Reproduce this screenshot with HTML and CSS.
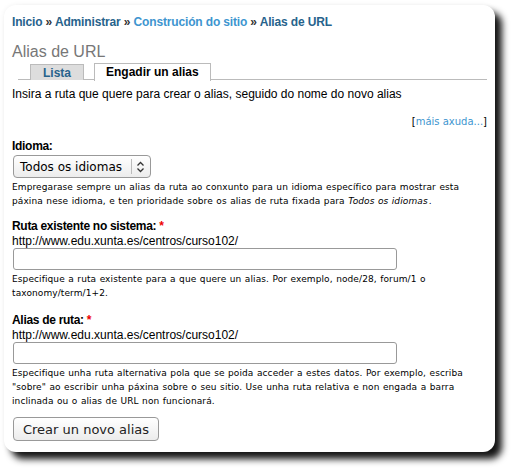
FILE: index.html
```html
<!DOCTYPE html>
<html lang="gl">
<head>
  <meta charset="UTF-8" />
  <title>Alias de URL</title>
  <link rel="stylesheet" href="styles.css">
</head>
<body>
  <div class="window">
    <div class="breadcrumb">
      <a href="#" class="crumb">Inicio</a> » <a href="#" class="crumb">Administrar</a> » <a href="#" class="crumb light">Construción do sitio</a> » <a href="#" class="crumb">Alias de URL</a>
    </div>
    <h1 class="title">Alias de URL</h1>
    <ul class="tabs">
      <li class="tab"><a href="#">Lista</a></li>
      <li class="tab active"><a href="#">Engadir un alias</a></li>
    </ul>
    <p class="intro">Insira a ruta que quere para crear o alias, seguido do nome do novo alias</p>
    <div class="more-help">[<a href="#">máis axuda...</a>]</div>

    <div class="field">
      <label class="label">Idioma:</label>
      <div class="select">
        <span class="select-value">Todos os idiomas</span>
        <span class="select-arrow">
          <svg width="9" height="12" viewBox="0 0 9 12"><path d="M1.5 4.5 L4.5 1.5 L7.5 4.5 M1.5 7.5 L4.5 10.5 L7.5 7.5" fill="none" stroke="#333" stroke-width="1.3"/></svg>
        </span>
      </div>
      <div class="desc">Empregarase sempre un alias da ruta ao conxunto para un idioma específico para mostrar esta páxina nese idioma, e ten prioridade sobre os alias de ruta fixada para <em>Todos os idiomas</em>.</div>
    </div>

    <div class="field">
      <label class="label">Ruta existente no sistema: <span class="req">*</span></label>
      <div class="prefix">http://www.edu.xunta.es/centros/curso102/</div>
      <input type="text" class="text-input">
      <div class="desc">Especifique a ruta existente para a que quere un alias. Por exemplo, node/28, forum/1 o taxonomy/term/1+2.</div>
    </div>

    <div class="field field-last">
      <label class="label">Alias de ruta: <span class="req">*</span></label>
      <div class="prefix">http://www.edu.xunta.es/centros/curso102/</div>
      <input type="text" class="text-input">
      <div class="desc">Especifique unha ruta alternativa pola que se poida acceder a estes datos. Por exemplo, escriba "sobre" ao escribir unha páxina sobre o seu sitio. Use unha ruta relativa e non engada a barra inclinada ou o alias de URL non funcionará.</div>
    </div>

    <button class="submit">Crear un novo alias</button>
  </div>
</body>
</html>
```

FILE: styles.css
```css
html, body {
  height: 100%;
}
body {
  margin: 0;
  background-color: #fff;
  font-family: "Liberation Sans", Arial, sans-serif;
  font-size: 12px;
  color: #000;
}
.window {
  margin: 5px 0 0 4px;
  width: 491px;
  height: 447px;
  box-sizing: border-box;
  padding: 10px 8px 0 8px;
  background-color: #fff;
  border-radius: 12px;
  box-shadow: 7px 7px 7px rgba(0,0,0,0.92), 0 0 5px rgba(0,0,0,0.06);
}
.breadcrumb {
  font-weight: bold;
  font-size: 12px;
  color: #333;
  letter-spacing: -0.15px;
  height: 14px;
  line-height: 14px;
}
.crumb {
  color: #27638c;
  text-decoration: none;
}
.crumb.light {
  color: #3d95cf;
}
.title {
  margin: 13px 0 0 0;
  font-size: 16px;
  font-weight: normal;
  color: #777;
  line-height: 20px;
}
.tabs {
  list-style: none;
  margin: 1px 0 0 6px;
  padding: 0 0 0 12px;
  display: flex;
  gap: 10px;
  border-bottom: 1px solid #bbb;
  height: 16px;
}
.tab a {
  display: block;
  height: 16px;
  line-height: 16px;
  padding: 0 12px;
  border: 1px solid #bbb;
  border-bottom: none;
  background-color: #ddd;
  font-weight: bold;
  color: #27638c;
  text-decoration: none;
  margin-top: 1px;
  box-sizing: border-box;
  text-align: center;
}
.tab.active a {
  background-color: #fff;
  color: #000;
  height: 18px;
  margin-top: 0;
  padding: 0 11px;
}
.intro {
  margin: 6px 0 0 0;
  line-height: 16px;
}
.more-help {
  text-align: right;
  font-family: "DejaVu Sans", sans-serif;
  font-size: 10px;
  margin-top: 13px;
  line-height: 13px;
}
.more-help a {
  color: #3d95cf;
  text-decoration: none;
}
.field {
  margin-top: 10px;
}
.field-last {
  margin-top: 12px;
}
.label {
  display: block;
  font-weight: bold;
  letter-spacing: -0.3px;
  line-height: 16px;
}
.req {
  color: #e00;
}
.select {
  margin: 1px 0 0 1px;
  width: 138px;
  height: 23px;
  box-sizing: border-box;
  border: 1px solid #999;
  border-radius: 4px;
  background: linear-gradient(#fff, #ececec);
  display: flex;
  align-items: center;
  font-family: "DejaVu Sans", sans-serif;
  font-size: 12px;
  white-space: nowrap;
}
.select-value {
  padding-left: 6px;
  flex: 1;
}
.select-arrow {
  border-left: 1px solid #bbb;
  height: 15px;
  padding: 0 5px 0 4px;
  display: flex;
  align-items: center;
}
.desc {
  font-family: "DejaVu Sans", sans-serif;
  font-size: 9px;
  letter-spacing: 0.1px;
  word-spacing: 0.5px;
  line-height: 14px;
  margin-top: 2px;
  width: 458px;
}
.desc em {
  padding-right: 1px;
}
.prefix {
  line-height: 14px;
}
.text-input {
  display: block;
  margin: 0 0 0 1px;
  width: 384px;
  height: 22px;
  box-sizing: border-box;
  border: 1px solid #999;
  border-radius: 3px;
  background: #fff;
}
.submit {
  margin: 9px 0 0 1px;
  width: 146px;
  height: 24px;
  border: 1px solid #999;
  border-radius: 4px;
  background: linear-gradient(#fff, #ececec);
  font-family: "DejaVu Sans", sans-serif;
  font-size: 13px;
  color: #222;
  padding: 0;
}
```
